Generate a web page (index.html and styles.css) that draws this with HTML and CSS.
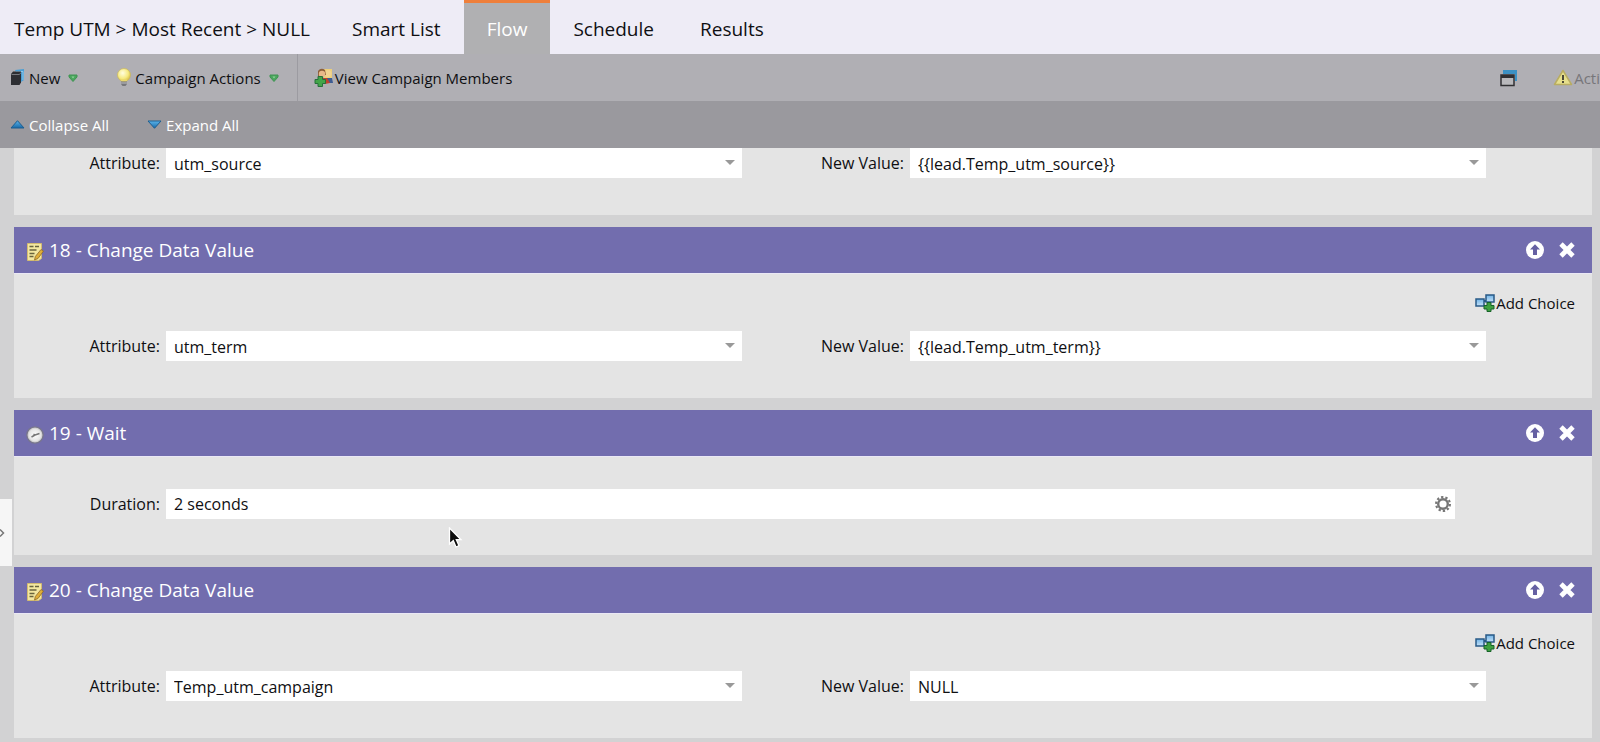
FILE: index.html
```html
<!DOCTYPE html>
<html lang="en">
<head>
<meta charset="utf-8">
<title>Campaign Flow</title>
<link rel="stylesheet" href="styles.css">
</head>
<body>
<svg class="sprite" aria-hidden="true">
  <defs>
    <linearGradient id="blue" x1="0" y1="0" x2="0" y2="1"><stop offset="0" stop-color="#5bb4ea"/><stop offset="1" stop-color="#1769a8"/></linearGradient>
    <linearGradient id="sky" x1="0" y1="0" x2="0" y2="1"><stop offset="0" stop-color="#6fb2e6"/><stop offset="1" stop-color="#c8e3f8"/></linearGradient>
    <radialGradient id="glow" cx=".4" cy=".35" r=".7"><stop offset="0" stop-color="#fffde0"/><stop offset=".6" stop-color="#f6ea80"/><stop offset="1" stop-color="#d3b640"/></radialGradient>
    <radialGradient id="dial" cx=".5" cy=".5" r=".5"><stop offset="0" stop-color="#fff"/><stop offset=".7" stop-color="#e6e6e6"/><stop offset="1" stop-color="#b6b6b6"/></radialGradient>
  </defs>
  <symbol id="note" viewBox="0 0 18 20">
    <path d="M1.500 1.500h14v15l-3 2h-11z" fill="#f3e7a0" stroke="#d3bb70"/>
    <path d="M3.500 4.500h4M9 4.500h4M3.500 8h7M3.500 11.500h5M3.500 14.500h4" stroke="#69643e" stroke-width="1.500"/>
    <path d="M15 7.500l2.500 1.500-5.500 7.500-3.500 1.500.8-3.500z" fill="#dfae38" stroke="#8d6a2b" stroke-width=".8"/>
  </symbol>
  <symbol id="clock" viewBox="0 0 18 18">
    <circle cx="9" cy="9" r="8.200" fill="url(#dial)" stroke="#77758c" stroke-width="1.300"/>
    <path d="M5.500 11L9 9l4.500-1.500M9 9L7.500 8" fill="none" stroke="#777" stroke-width="1.500"/>
  </symbol>
  <symbol id="up" viewBox="0 0 18 18">
    <circle cx="9" cy="9" r="9" fill="#fff"/>
    <path d="M9 3.200l5 5.300h-3v5.500H7V8.500H4z" fill="#6661a3"/>
  </symbol>
  <symbol id="close" viewBox="0 0 18 18">
    <path d="M3 3l12 12M15 3L3 15" stroke="#fff" stroke-width="4.800"/>
  </symbol>
  <symbol id="choice" viewBox="0 0 20 18">
    <path d="M8 7h4" stroke="#24557f" stroke-width="2"/>
    <rect x="1" y="5" width="8" height="7" fill="url(#sky)" stroke="#285a87" stroke-width="1.500"/>
    <rect x="11" y="1" width="8" height="7" fill="url(#sky)" stroke="#285a87" stroke-width="1.500"/>
    <path d="M12 8.500h4v3h3v3.500h-3v2.500h-4V15H9v-3.500h3z" fill="#3da03f" stroke="#176229"/>
  </symbol>
  <symbol id="caret" viewBox="0 0 10 8">
    <path d="M1 1h8v2L5 7.500 1 3z" fill="#4aa55d" stroke="#3f9452"/>
    <path d="M3.500 2.500h3L5 4.500z" fill="#8fd39b"/>
  </symbol>
  <symbol id="gear" viewBox="0 0 16 16">
    <circle cx="8" cy="8" r="4.800" fill="none" stroke="#777" stroke-width="2.400"/>
    <circle cx="8" cy="8" r="6.900" fill="none" stroke="#777" stroke-width="2.200" stroke-dasharray="2.335 2"/>
  </symbol>
</svg>

<header class="tabs">
  <h1 class="tabs__title">Temp UTM &gt; Most Recent &gt; NULL</h1>
  <nav class="tabs__nav">
    <a class="tab" href="#smart-list">Smart List</a>
    <a class="tab tab--active" href="#flow" aria-current="page">Flow</a>
    <a class="tab" href="#schedule">Schedule</a>
    <a class="tab" href="#results">Results</a>
  </nav>
</header>

<div class="toolbar">
  <div class="toolbar__group">
    <button class="tool" type="button">
      <svg width="15" height="17" viewBox="0 0 15 17" aria-hidden="true"><path d="M5 1l9-1v11l-3 2z" fill="#4a9fd5"/><path d="M6 2.500h7V11" fill="none" stroke="#91c9ea"/><path d="M1 5l2-2.500h8v11L9.500 16H1z" fill="#2d2e33"/><path d="M1.500 5.500h8M9.500 5.500l1.500-2" stroke="#77797f"/></svg>
      <span>New</span>
      <svg class="tool__caret" width="10" height="8" aria-hidden="true"><use href="#caret"/></svg>
    </button>
    <button class="tool" type="button">
      <svg width="14" height="19" viewBox="0 0 14 19" aria-hidden="true"><circle cx="7" cy="7" r="6.500" fill="url(#glow)" stroke="#ccb75a" stroke-width=".7"/><path d="M3.500 11.500h7l-1 2h-5z" fill="#ecd96e"/><path d="M4 13.500h6v2.500l-1.500 2h-3L4 16z" fill="#77777b"/><path d="M4 15h6" stroke="#c0c0c4"/></svg>
      <span>Campaign Actions</span>
      <svg class="tool__caret" width="10" height="8" aria-hidden="true"><use href="#caret"/></svg>
    </button>
  </div>
  <div class="toolbar__group toolbar__group--divided">
    <button class="tool tool--tight" type="button">
      <svg width="20" height="19" viewBox="0 0 20 19" aria-hidden="true"><path d="M10 1h8v10h-8z" fill="#edcf7b"/><circle cx="14" cy="5.500" r="3.500" fill="#f2d391"/><path d="M12 10h6l1 5h-7z" fill="#3d5c93"/><path d="M4 8V3q3-4 7-1l1 5z" fill="#8d5e39"/><circle cx="8" cy="6" r="3.200" fill="#e8b889"/><path d="M8 10h5l3 5-5 1z" fill="#c3402e"/><path d="M4 8.500h4.500V11.500h3v4h-3v3H4v-3H1v-4h3z" fill="#43a549" stroke="#27713a"/></svg>
      <span>View Campaign Members</span>
    </button>
  </div>
  <div class="toolbar__end">
    <button class="tool" type="button" aria-label="Open in window">
      <svg width="18" height="18" viewBox="0 0 18 18" aria-hidden="true"><path d="M3 1h14v11h-2V5H3z" fill="#3c91c4"/><rect x="1" y="6" width="13" height="10.500" fill="#b9b9bc" stroke="#303033" stroke-width="1.500"/><path d="M1 7.500h13" stroke="#303033" stroke-width="3"/></svg>
    </button>
    <button class="tool tool--tight tool--muted" type="button">
      <svg width="20" height="17" viewBox="0 0 20 17" aria-hidden="true"><path d="M10 1.500L18.500 15.500h-17z" fill="#e6df8c" stroke="#b9ad62" stroke-width="1.500" stroke-linejoin="round"/><path d="M10 6v5M10 12v2" stroke="#4d4a38" stroke-width="2"/></svg>
      <span>Acti</span>
    </button>
  </div>
</div>

<div class="subbar">
  <button class="tool tool--light" type="button">
    <svg width="15" height="9" viewBox="0 0 15 9" aria-hidden="true"><path d="M7.500.7L14 8H1z" fill="url(#blue)" stroke="#1d5e91"/></svg>
    <span>Collapse All</span>
  </button>
  <button class="tool tool--light" type="button">
    <svg width="15" height="9" viewBox="0 0 15 9" aria-hidden="true"><path d="M7.500 8.300L14 1H1z" fill="url(#blue)" stroke="#1d5e91"/></svg>
    <span>Expand All</span>
  </button>
</div>

<main class="flow">
  <section class="step step--clipped">
    <div class="step__body">
      <div class="fields">
        <label class="fields__label" for="a17">Attribute:</label>
        <select class="field" id="a17"><option>utm_source</option></select>
        <label class="fields__label" for="v17">New Value:</label>
        <select class="field" id="v17"><option>{{lead.Temp_utm_source}}</option></select>
      </div>
    </div>
  </section>

  <section class="step">
    <header class="step__head">
      <svg class="step__icon" width="18" height="20" aria-hidden="true"><use href="#note"/></svg>
      <h2 class="step__title">18 - Change Data Value</h2>
      <button class="step__btn" type="button" aria-label="Move up"><svg width="18" height="18"><use href="#up"/></svg></button>
      <button class="step__btn" type="button" aria-label="Remove"><svg width="18" height="18"><use href="#close"/></svg></button>
    </header>
    <div class="step__body">
      <button class="add" type="button"><svg width="20" height="18" aria-hidden="true"><use href="#choice"/></svg><span>Add Choice</span></button>
      <div class="fields">
        <label class="fields__label" for="a18">Attribute:</label>
        <select class="field" id="a18"><option>utm_term</option></select>
        <label class="fields__label" for="v18">New Value:</label>
        <select class="field" id="v18"><option>{{lead.Temp_utm_term}}</option></select>
      </div>
    </div>
  </section>

  <section class="step">
    <header class="step__head">
      <svg class="step__icon" width="18" height="18" aria-hidden="true"><use href="#clock"/></svg>
      <h2 class="step__title">19 - Wait</h2>
      <button class="step__btn" type="button" aria-label="Move up"><svg width="18" height="18"><use href="#up"/></svg></button>
      <button class="step__btn" type="button" aria-label="Remove"><svg width="18" height="18"><use href="#close"/></svg></button>
    </header>
    <div class="step__body step__body--wait">
      <div class="fields fields--single">
        <label class="fields__label" for="d19">Duration:</label>
        <div class="duration">
          <input class="duration__input" id="d19" type="text" value="2 seconds">
          <button class="duration__btn" type="button" aria-label="Duration settings"><svg width="16" height="16"><use href="#gear"/></svg></button>
        </div>
      </div>
    </div>
  </section>

  <section class="step">
    <header class="step__head">
      <svg class="step__icon" width="18" height="20" aria-hidden="true"><use href="#note"/></svg>
      <h2 class="step__title">20 - Change Data Value</h2>
      <button class="step__btn" type="button" aria-label="Move up"><svg width="18" height="18"><use href="#up"/></svg></button>
      <button class="step__btn" type="button" aria-label="Remove"><svg width="18" height="18"><use href="#close"/></svg></button>
    </header>
    <div class="step__body">
      <button class="add" type="button"><svg width="20" height="18" aria-hidden="true"><use href="#choice"/></svg><span>Add Choice</span></button>
      <div class="fields">
        <label class="fields__label" for="a20">Attribute:</label>
        <select class="field" id="a20"><option>Temp_utm_campaign</option></select>
        <label class="fields__label" for="v20">New Value:</label>
        <select class="field" id="v20"><option>NULL</option></select>
      </div>
    </div>
  </section>
</main>

<button class="drawer" type="button" aria-label="Open side panel">
  <svg width="5" height="10" viewBox="0 0 5 10"><path d="M0 1.500L3.500 5 0 8.500" fill="none" stroke="#777" stroke-width="1.500"/></svg>
</button>
<svg class="pointer" width="16" height="22" viewBox="0 0 16 22" aria-hidden="true"><path d="M1.500 1v16l3.800-3.500L8 20l3-1.300-2.700-6H13z" fill="#0c0c0c" stroke="#fff" stroke-width="1.300"/></svg>
</body>
</html>
```
FILE: styles.css
```css
* { box-sizing: border-box; }

body {
  margin: 0;
  min-height: 100vh;
  background: #d2d2d3;
  color: #0f0f12;
  font: 16px/22px "Open Sans", "Noto Sans", sans-serif;
  overflow: hidden;
}

button, select, input { font: inherit; color: inherit; border: 0; border-radius: 0; margin: 0; padding: 0; background: none; }
svg { display: block; flex: none; }
.sprite { position: absolute; width: 0; height: 0; }

.tabs { display: flex; height: 54px; background: #eeecf6; }
.tabs__title { margin: 0; padding: 4px 19px 0 14px; font-size: 19px; font-weight: 400; line-height: 50px; white-space: nowrap; }
.tabs__nav { display: flex; }
.tab {
  padding: 1px 23px 0;
  border-top: 3px solid transparent;
  color: inherit;
  font-size: 19px;
  line-height: 50px;
  text-decoration: none;
  white-space: nowrap;
}
.tab--active { background: #b0b0b2; border-color: #ee7f3b; color: #fff; }

.toolbar { display: flex; height: 47px; background: #b0afb4; overflow: hidden; }
.toolbar__group { display: flex; gap: 39px; padding: 0 18px 0 10px; }
.toolbar__group--divided { padding-left: 16px; border-left: 1px solid #9c9ba1; }
.toolbar__end { display: flex; gap: 35px; margin-left: auto; }
.tool { display: flex; align-items: center; gap: 4px; font-size: 15px; white-space: nowrap; }
.tool--tight { gap: 1px; }
.tool--muted { color: #77767a; }
.tool--light { color: #fff; }
.tool__caret { margin-left: 4px; }

.subbar { display: flex; gap: 38px; height: 47px; padding-left: 10px; background: #9a999e; }

.flow { display: flex; flex-direction: column; gap: 12px; padding: 0 8px 0 14px; }
.step__head { display: flex; align-items: center; gap: 14px; height: 46px; padding: 0 16px 0 12px; background: #726dae; color: #fff; }
.step__icon { margin-top: 4px; }
.step__title { flex: 1; margin: 0 0 0 -9px; font-size: 19px; font-weight: 400; line-height: 26px; }
.step__body { display: flex; flex-direction: column; gap: 17px; padding: 18px 0 37px; border-top: 1px solid #eae8f5; background: #e4e4e4; }
.step__body--wait { padding: 32px 0 36px; }
.step--clipped .step__body { padding-top: 0; border-top: 0; }
.add { display: flex; align-items: center; align-self: flex-end; gap: 1px; margin-right: 17px; font-size: 15px; }

.fields { display: grid; grid-template-columns: 146px 1fr 156px 1fr; column-gap: 6px; padding-right: 106px; }
.fields--single { grid-template-columns: 146px 1fr; padding-right: 137px; }
.fields__label { line-height: 30px; text-align: right; }
.field {
  width: 100%;
  min-width: 0;
  height: 30px;
  padding: 2px 28px 0 8px;
  appearance: none;
  background: #fff url("data:image/svg+xml,%3Csvg xmlns='http://www.w3.org/2000/svg' width='10' height='5'%3E%3Cpath d='M0 0h10L5 5z' fill='%23999'/%3E%3C/svg%3E") no-repeat right 7px top 12px;
}
.duration { display: flex; align-items: center; height: 30px; padding-right: 4px; background: #fff; }
.duration__input { flex: 1; min-width: 0; height: 30px; padding: 0 8px; outline: 0; }

.drawer { position: absolute; left: 0; top: 499px; display: flex; align-items: center; width: 12px; height: 67px; background: #f6f6f6; }
.pointer { position: absolute; left: 448px; top: 527px; pointer-events: none; }
```
